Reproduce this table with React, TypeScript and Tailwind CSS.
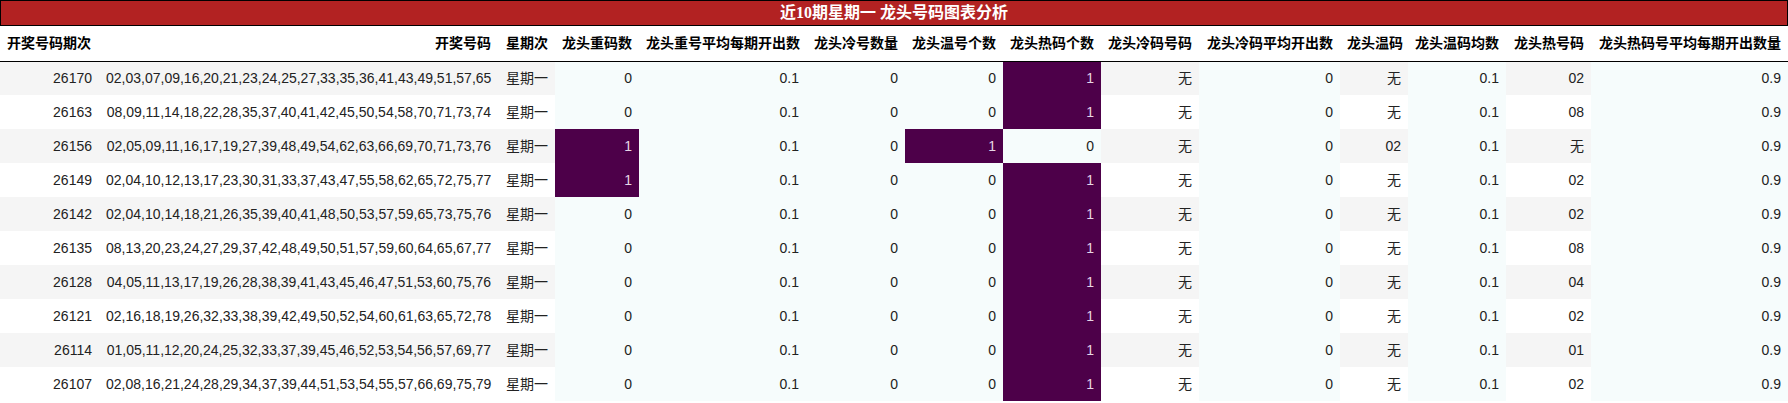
import React from 'react';

type Row = {
  issue: string;
  nums: string;
  week: string;
  rep: number;
  repAvg: string;
  cold: number;
  warm: number;
  hot: number;
  coldNum: string;
  coldAvg: string;
  warmNum: string;
  warmAvg: string;
  hotNum: string;
  hotAvg: string;
};

const rows: Row[] = [
  { issue: '26170', nums: '02,03,07,09,16,20,21,23,24,25,27,33,35,36,41,43,49,51,57,65', week: '星期一', rep: 0, repAvg: '0.1', cold: 0, warm: 0, hot: 1, coldNum: '无', coldAvg: '0', warmNum: '无', warmAvg: '0.1', hotNum: '02', hotAvg: '0.9' },
  { issue: '26163', nums: '08,09,11,14,18,22,28,35,37,40,41,42,45,50,54,58,70,71,73,74', week: '星期一', rep: 0, repAvg: '0.1', cold: 0, warm: 0, hot: 1, coldNum: '无', coldAvg: '0', warmNum: '无', warmAvg: '0.1', hotNum: '08', hotAvg: '0.9' },
  { issue: '26156', nums: '02,05,09,11,16,17,19,27,39,48,49,54,62,63,66,69,70,71,73,76', week: '星期一', rep: 1, repAvg: '0.1', cold: 0, warm: 1, hot: 0, coldNum: '无', coldAvg: '0', warmNum: '02', warmAvg: '0.1', hotNum: '无', hotAvg: '0.9' },
  { issue: '26149', nums: '02,04,10,12,13,17,23,30,31,33,37,43,47,55,58,62,65,72,75,77', week: '星期一', rep: 1, repAvg: '0.1', cold: 0, warm: 0, hot: 1, coldNum: '无', coldAvg: '0', warmNum: '无', warmAvg: '0.1', hotNum: '02', hotAvg: '0.9' },
  { issue: '26142', nums: '02,04,10,14,18,21,26,35,39,40,41,48,50,53,57,59,65,73,75,76', week: '星期一', rep: 0, repAvg: '0.1', cold: 0, warm: 0, hot: 1, coldNum: '无', coldAvg: '0', warmNum: '无', warmAvg: '0.1', hotNum: '02', hotAvg: '0.9' },
  { issue: '26135', nums: '08,13,20,23,24,27,29,37,42,48,49,50,51,57,59,60,64,65,67,77', week: '星期一', rep: 0, repAvg: '0.1', cold: 0, warm: 0, hot: 1, coldNum: '无', coldAvg: '0', warmNum: '无', warmAvg: '0.1', hotNum: '08', hotAvg: '0.9' },
  { issue: '26128', nums: '04,05,11,13,17,19,26,28,38,39,41,43,45,46,47,51,53,60,75,76', week: '星期一', rep: 0, repAvg: '0.1', cold: 0, warm: 0, hot: 1, coldNum: '无', coldAvg: '0', warmNum: '无', warmAvg: '0.1', hotNum: '04', hotAvg: '0.9' },
  { issue: '26121', nums: '02,16,18,19,26,32,33,38,39,42,49,50,52,54,60,61,63,65,72,78', week: '星期一', rep: 0, repAvg: '0.1', cold: 0, warm: 0, hot: 1, coldNum: '无', coldAvg: '0', warmNum: '无', warmAvg: '0.1', hotNum: '02', hotAvg: '0.9' },
  { issue: '26114', nums: '01,05,11,12,20,24,25,32,33,37,39,45,46,52,53,54,56,57,69,77', week: '星期一', rep: 0, repAvg: '0.1', cold: 0, warm: 0, hot: 1, coldNum: '无', coldAvg: '0', warmNum: '无', warmAvg: '0.1', hotNum: '01', hotAvg: '0.9' },
  { issue: '26107', nums: '02,08,16,21,24,28,29,34,37,39,44,51,53,54,55,57,66,69,75,79', week: '星期一', rep: 0, repAvg: '0.1', cold: 0, warm: 0, hot: 1, coldNum: '无', coldAvg: '0', warmNum: '无', warmAvg: '0.1', hotNum: '02', hotAvg: '0.9' },
];

const headers: { label: string; w: string }[] = [
  { label: '开奖号码期次', w: 'w-[99px]' },
  { label: '开奖号码', w: 'w-[399px]' },
  { label: '星期次', w: 'w-[57px]' },
  { label: '龙头重码数', w: 'w-[84px]' },
  { label: '龙头重号平均每期开出数', w: 'w-[167px]' },
  { label: '龙头冷号数量', w: 'w-[99px]' },
  { label: '龙头温号个数', w: 'w-[98px]' },
  { label: '龙头热码个数', w: 'w-[98px]' },
  { label: '龙头冷码号码', w: 'w-[98px]' },
  { label: '龙头冷码平均开出数', w: 'w-[141px]' },
  { label: '龙头温码', w: 'w-[68px]' },
  { label: '龙头温码均数', w: 'w-[98px]' },
  { label: '龙头热号码', w: 'w-[85px]' },
  { label: '龙头热码号平均每期开出数量', w: 'w-[197px]' },
];

// striped text columns vs. tinted numeric columns
const Striped = ({ i, children }: { i: number; children: React.ReactNode }) => (
  <td className={`px-[7px] text-right whitespace-nowrap ${i % 2 === 0 ? 'bg-[#f5f5f5]' : 'bg-white'}`}>{children}</td>
);

const Num = ({ children }: { children: React.ReactNode }) => (
  <td className="px-[7px] text-right whitespace-nowrap bg-[#f6fcfc]">{children}</td>
);

const Heat = ({ v }: { v: number }) => (
  <td className={`px-[7px] text-right whitespace-nowrap ${v === 1 ? 'bg-[#4d0049] text-[#e6d6e6]' : 'bg-[#f6fcfc]'}`}>{v}</td>
);

export default function App() {
  return (
    <div className="w-[1788px] bg-white text-[#222] font-['Liberation_Sans','Noto_Sans_CJK_SC',sans-serif] text-[14px]">
      <div className="h-[26px] border border-black bg-[#b22222] text-white text-[16px] font-bold flex items-center justify-center font-['Liberation_Serif','Noto_Sans_CJK_SC',serif]">
        近10期星期一 龙头号码图表分析
      </div>
      <table className="w-full table-fixed border-collapse">
        <thead>
          <tr className="h-[35px] border-b border-black">
            {headers.map((h, i) => (
              <th key={h.label} className={`${h.w} px-[7px] font-bold text-black whitespace-nowrap ${i === 0 ? 'text-left' : 'text-right'}`}>
                {h.label}
              </th>
            ))}
          </tr>
        </thead>
        <tbody>
          {rows.map((r, i) => (
            <tr key={r.issue} className="h-[34px]">
              <Striped i={i}>{r.issue}</Striped>
              <Striped i={i}>{r.nums}</Striped>
              <Striped i={i}>{r.week}</Striped>
              <Heat v={r.rep} />
              <Num>{r.repAvg}</Num>
              <Num>{r.cold}</Num>
              <Heat v={r.warm} />
              <Heat v={r.hot} />
              <Striped i={i}>{r.coldNum}</Striped>
              <Num>{r.coldAvg}</Num>
              <Striped i={i}>{r.warmNum}</Striped>
              <Num>{r.warmAvg}</Num>
              <Striped i={i}>{r.hotNum}</Striped>
              <Num>{r.hotAvg}</Num>
            </tr>
          ))}
        </tbody>
      </table>
    </div>
  );
}
